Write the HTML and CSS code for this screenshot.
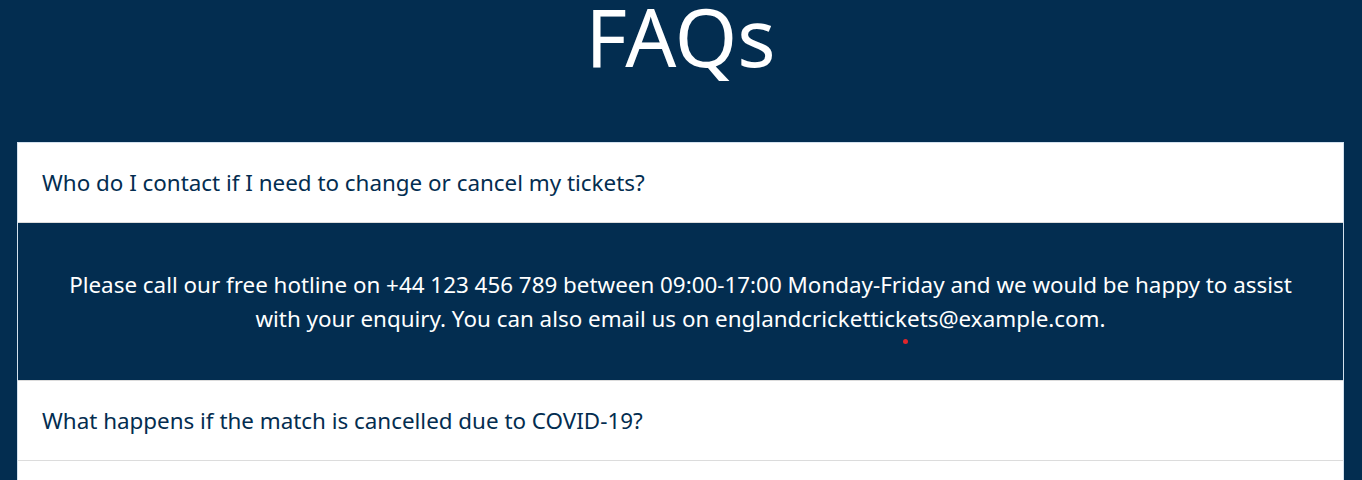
FILE: index.html
```html
<!DOCTYPE html>
<html lang="en">
<head>
<meta charset="utf-8">
<title>FAQs</title>
<link rel="stylesheet" href="styles.css">
</head>
<body>
<section class="faq-page">
  <h1 class="faq-title">FAQs</h1>
  <div class="faq-list">
    <div class="faq-item">
      <div class="faq-question">Who do I contact if I need to change or cancel my tickets?</div>
      <div class="faq-answer">
        <p>Please call our free hotline on +44 123 456 789 between 09:00-17:00 Monday-Friday and we would be happy to assist with your enquiry. You can also email us on englandcrickettickets@example.com.</p>
        <span class="dot"></span>
      </div>
    </div>
    <div class="faq-item">
      <div class="faq-question">What happens if the match is cancelled due to COVID-19?</div>
    </div>
  </div>
</section>
</body>
</html>
```
FILE: styles.css
```css
html, body {
  margin: 0;
  padding: 0;
}
body {
  background: #032d50;
  font-family: "Noto Sans", "Open Sans", sans-serif;
  overflow: hidden;
}
.faq-page {
  padding: 0 18px 0 17px;
}
.faq-title {
  margin: 0;
  padding: 0 0 70px;
  text-align: center;
  color: #fff;
  font-weight: 400;
  font-size: 80px;
  line-height: 72px;
}
.faq-list {
  border: 1px solid #d3e1ee;
  border-bottom: none;
  background: #fff;
  height: 400px;
}
.faq-item {
  border-bottom: 1px solid #dcdcdc;
}
.faq-question {
  background: #fff;
  color: #032d50;
  font-size: 22.4px;
  line-height: 32px;
  padding: 24px 24px 23px;
}
.faq-answer {
  position: relative;
  background: #032d50;
  color: #fff;
  text-align: center;
  font-size: 22.4px;
  line-height: 34px;
  padding: 45px 50px 44px;
  border-top: 1px solid #dcdcdc;
}
.faq-answer p {
  margin: 0;
}
.dot {
  position: absolute;
  left: 885px;
  top: 116px;
  width: 5px;
  height: 5px;
  border-radius: 50%;
  background: #e0262b;
}
```
